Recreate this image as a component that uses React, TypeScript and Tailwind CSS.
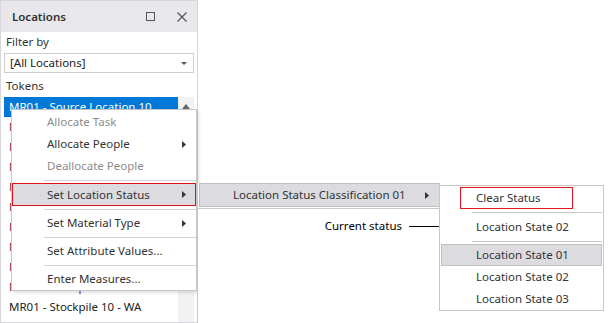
import React from "react";

const FONT = "font-['Noto_Sans',sans-serif]";

function Arrow() {
  return (
    <svg width="4" height="7" viewBox="0 0 4 7" className="shrink-0">
      <path d="M0 0 L4 3.5 L0 7 Z" fill="#333" />
    </svg>
  );
}

function MenuItem({
  label,
  disabled,
  sub,
}: {
  label: string;
  disabled?: boolean;
  sub?: boolean;
}) {
  return (
    <div
      className={`flex h-[22px] items-center justify-between pl-[35px] pr-[10px] ${
        disabled ? "text-[#8c8c8c]" : "text-[#333]"
      }`}
    >
      <span>{label}</span>
      {sub && <Arrow />}
    </div>
  );
}

function Sep({ left }: { left: string }) {
  return (
    <div className="flex h-[6px] items-center">
      <div className={`h-px flex-1 bg-[#d2d2d2] ${left}`} />
    </div>
  );
}

const tokens = Array.from({ length: 11 }, (_, i) =>
  i === 0 ? "MR01 - Source Location 10" : "MR01 - Stockpile 10 - WA"
);

export default function App() {
  return (
    <div
      className={`relative h-[323px] w-[612px] overflow-hidden bg-white text-[11.5px] ${FONT}`}
    >
      {/* Locations panel */}
      <div className="flex h-[323px] w-[198px] flex-col border border-[#d6d6dc] bg-white">
        <div className="flex h-[31px] items-center justify-between bg-[#e8e8ec] pl-[11px] pr-[10px]">
          <span className="text-[11.5px] font-semibold text-[#333]">Locations</span>
          <div className="flex items-center gap-[22px]">
            <div className="h-[9px] w-[9px] border border-[#555]" />
            <svg width="10" height="10" viewBox="0 0 10 10">
              <path d="M0.5 0.5 L9.5 9.5 M9.5 0.5 L0.5 9.5" stroke="#555" strokeWidth="1.2" />
            </svg>
          </div>
        </div>
        <div className="flex flex-1 flex-col px-[3px]">
          <div className="flex h-[20px] items-center pl-[2px] text-[#333]">Filter by</div>
          <div className="mt-px flex h-[20px] items-center justify-between border border-[#cfcfcf] bg-white pl-[5px] pr-[6px] text-[#222]">
            <span>[All Locations]</span>
            <svg width="6" height="3" viewBox="0 0 6 3">
              <path d="M0 0 L6 0 L3 3 Z" fill="#555" />
            </svg>
          </div>
          <div className="mt-[3px] flex h-[20px] items-center pl-[2px] text-[#333]">Tokens</div>
          <div className="mt-px flex flex-1 overflow-hidden">
            <div className="flex flex-1 flex-col">
              {tokens.map((t, i) => (
                <div
                  key={i}
                  className={`flex h-[20px] shrink-0 items-center pl-[5px] ${
                    i === 0
                      ? "bg-[#0078d7] text-white"
                      : i === 10
                      ? "text-[#222]"
                      : "text-[#7a1533]"
                  }`}
                >
                  {t}
                </div>
              ))}
            </div>
            <div className="flex w-[16px] justify-center bg-[#f2f2f2] pt-[7px]">
              <svg width="8" height="5" viewBox="0 0 8 5">
                <path d="M0 5 L4 0 L8 5 Z" fill="#666" />
              </svg>
            </div>
          </div>
        </div>
      </div>

      {/* Context menu */}
      <div className="absolute left-[11px] top-[109px] w-[186px] border border-[#c6c6c6] bg-white pt-[1px] shadow-[2px_2px_3px_rgba(0,0,0,0.12)]">
        <MenuItem label="Allocate Task" disabled />
        <MenuItem label="Allocate People" sub />
        <MenuItem label="Deallocate People" disabled />
        <Sep left="ml-[32px]" />
        <div className="flex h-[23px] items-center justify-between border border-[#e0161e] bg-[#dcdce0] pl-[34px] pr-[9px] text-[#333]">
          <span>Set Location Status</span>
          <Arrow />
        </div>
        <Sep left="ml-[32px]" />
        <MenuItem label="Set Material Type" sub />
        <Sep left="ml-[32px]" />
        <MenuItem label="Set Attribute Values..." />
        <Sep left="ml-[32px]" />
        <MenuItem label="Enter Measures..." />
      </div>

      {/* Submenu: classification */}
      <div className="absolute left-[197px] top-[183px] h-[140px] w-[243px] border-l border-[#c8c8c8] bg-white">
        <div className="ml-px flex h-[24px] items-center justify-between border border-[#c0c0c0] bg-[#dcdce0] pl-[33px] pr-[10px] text-[#333]">
          <span>Location Status Classification 01</span>
          <Arrow />
        </div>
        <div className="mt-px h-px bg-[#c8c8c8]" />
      </div>

      {/* Annotation */}
      <div className="absolute left-[300px] top-[217px] flex h-[18px] w-[139px] items-center justify-end">
        <span className="text-black">Current status</span>
        <div className="ml-[7px] h-px w-[30px] bg-black" />
      </div>

      {/* Submenu: states */}
      <div className="absolute left-[439px] top-[185px] w-[165px] border border-[#c8c8c8] bg-white pt-px">
        <div className="ml-[20px] flex h-[22px] w-[113px] items-center border border-[#e0161e] pl-[15px] text-[#333]">
          Clear Status
        </div>
        <div className="flex h-[7px] items-center">
          <div className="ml-[32px] mr-px h-px flex-1 bg-[#c8c8c8]" />
        </div>
        <div className="flex h-[22px] items-center pl-[36px] text-[#333]">Location State 02</div>
        <div className="flex h-[6px] items-center">
          <div className="ml-[32px] mr-px h-px flex-1 bg-[#c8c8c8]" />
        </div>
        <div className="mx-px flex h-[22px] items-center border border-[#c0c0c0] bg-[#dcdce0] pl-[34px] text-[#333]">
          Location State 01
        </div>
        <div className="flex h-[22px] items-center pl-[36px] text-[#333]">Location State 02</div>
        <div className="flex h-[22px] items-center pl-[36px] text-[#333]">Location State 03</div>
      </div>
    </div>
  );
}
